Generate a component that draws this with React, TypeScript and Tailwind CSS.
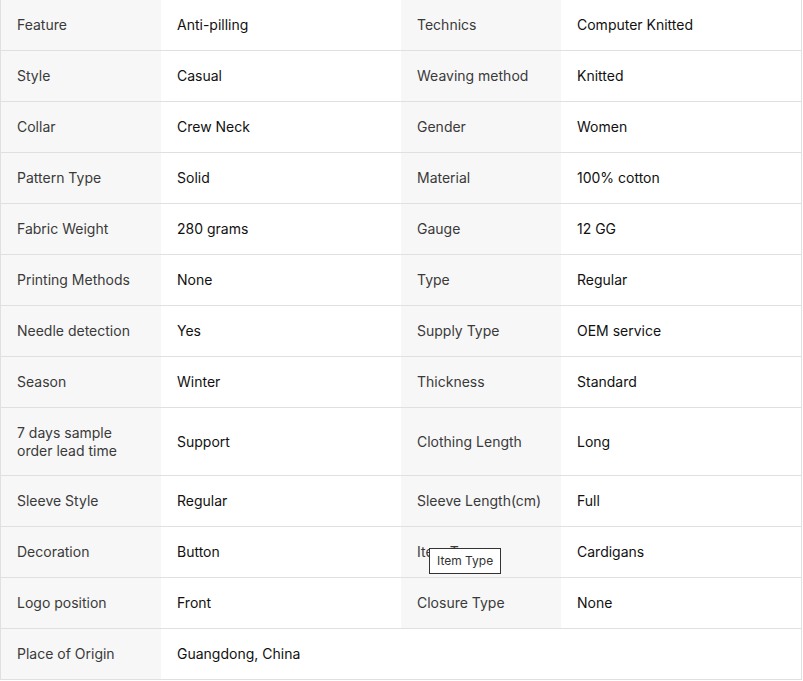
import React from 'react';

type Row = [string, string, string?, string?];

const rows: Row[] = [
  ['Feature', 'Anti-pilling', 'Technics', 'Computer Knitted'],
  ['Style', 'Casual', 'Weaving method', 'Knitted'],
  ['Collar', 'Crew Neck', 'Gender', 'Women'],
  ['Pattern Type', 'Solid', 'Material', '100% cotton'],
  ['Fabric Weight', '280 grams', 'Gauge', '12 GG'],
  ['Printing Methods', 'None', 'Type', 'Regular'],
  ['Needle detection', 'Yes', 'Supply Type', 'OEM service'],
  ['Season', 'Winter', 'Thickness', 'Standard'],
  ['7 days sample order lead time', 'Support', 'Clothing Length', 'Long'],
  ['Sleeve Style', 'Regular', 'Sleeve Length(cm)', 'Full'],
  ['Decoration', 'Button', 'Item Type', 'Cardigans'],
  ['Logo position', 'Front', 'Closure Type', 'None'],
  ['Place of Origin', 'Guangdong, China'],
];

const Label = ({ text, tip }: { text: string; tip?: boolean }) => (
  <div className="relative w-[160px] shrink-0 bg-[#f7f7f7] px-4 py-[15.5px] min-h-[50px] flex items-center text-[#3a3a3a]">
    {text}
    {tip && (
      <div className="absolute left-[28px] top-[21px] border border-[#333] bg-white px-[7px] h-[26px] flex items-center text-[12px] text-[#333]">
        Item Type
      </div>
    )}
  </div>
);

const Value = ({ text, wide }: { text: string; wide?: boolean }) => (
  <div className={`${wide ? 'flex-1' : 'w-[240px] shrink-0'} px-4 py-[15.5px] min-h-[50px] flex items-center text-[#111]`}>
    {text}
  </div>
);

export default function App() {
  return (
    <div className="bg-white min-h-screen" style={{ fontFamily: 'Inter, "Noto Sans", sans-serif' }}>
      <div className="w-[802px] border-x border-[#e0e0e0] text-[14px] leading-[18px]">
        {rows.map((r, i) => (
          <div key={i} className="flex border-b border-[#e0e0e0]">
            <Label text={r[0]} />
            <Value text={r[1]} wide={!r[2]} />
            {r[2] && <Label text={r[2]} tip={r[2] === 'Item Type'} />}
            {r[3] && <Value text={r[3]} />}
          </div>
        ))}
      </div>
    </div>
  );
}
